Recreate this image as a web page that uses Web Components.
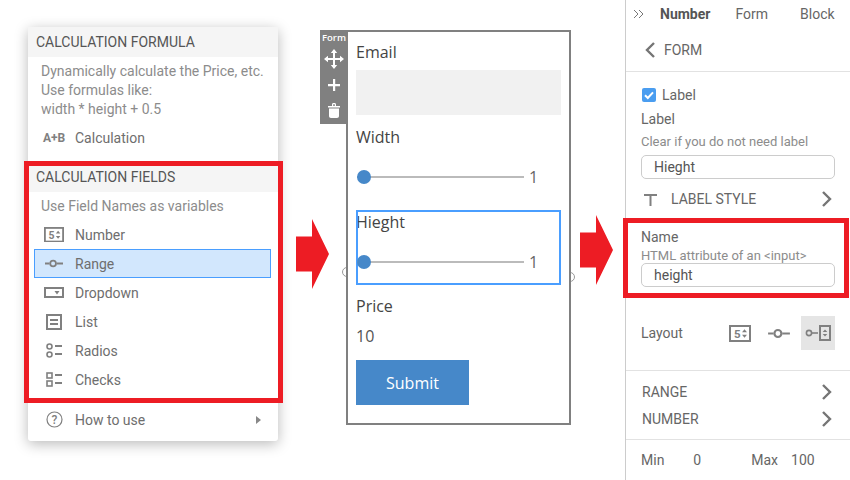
<!DOCTYPE html>
<html>
<head>
<meta charset="utf-8">
<title>Calculation fields</title>
<style>
    html, body { margin: 0; height: 100%; overflow: hidden; }
    html { background: #fff; }
    body { font-family: Roboto, "Liberation Sans", sans-serif; }
</style>
</head>
<body>
<demo-page>
    <calc-menu slot="menu"></calc-menu>
    <form-preview slot="form"></form-preview>
    <side-panel slot="side"></side-panel>
</demo-page>

<script>
// all the little grey pictures
const ICONS = {
    number: `<svg width="20" height="15.500" viewBox="0 0 22 17"><rect x="1" y="1" width="20" height="15" fill="none" stroke="#808080" stroke-width="2"/><text x="5" y="13" font-family="Roboto" font-size="11.5" font-weight="700" fill="#808080">5</text><path d="M13 7.2l2.5-3 2.5 3zM13 9.800l2.5 3 2.5-3z" fill="#808080"/></svg>`,
    range: `<svg width="20" height="9" viewBox="0 0 22 10"><path d="M1 5h5M14 5h7" stroke="#808080" stroke-width="2"/><circle cx="10" cy="5" r="3.2" fill="none" stroke="#808080" stroke-width="2"/></svg>`,
    rangeNumber: `<svg width="26" height="16" viewBox="0 0 26 16"><circle cx="4" cy="8" r="2.6" fill="none" stroke="#808080" stroke-width="1.6"/><path d="M7 8h6" stroke="#808080" stroke-width="1.6"/><rect x="15" y="1" width="10" height="14" fill="none" stroke="#808080" stroke-width="2"/><path d="M17.700 7l2.300-2.500 2.300 2.500zM17.700 9l2.300 2.500 2.300-2.500z" fill="#808080"/></svg>`,
    dropdown: `<svg width="20" height="11" viewBox="0 0 20 11"><rect x="1" y="1" width="18" height="9" fill="none" stroke="#808080" stroke-width="2"/><path d="M10.500 4h5l-2.500 3.500z" fill="#808080"/></svg>`,
    list: `<svg width="16" height="16" viewBox="0 0 16 16"><rect x="1" y="1" width="14" height="14" fill="none" stroke="#808080" stroke-width="2"/><path d="M4 6h8M4 10h8" stroke="#808080" stroke-width="2"/></svg>`,
    radios: `<svg width="17" height="15" viewBox="0 0 17 15"><circle cx="3.500" cy="3.500" r="2.500" fill="none" stroke="#808080" stroke-width="1.600"/><circle cx="3.500" cy="11.500" r="2.500" fill="none" stroke="#808080" stroke-width="1.600"/><path d="M9 3h7M9 11h7" stroke="#808080" stroke-width="2"/></svg>`,
    checks: `<svg width="17" height="15" viewBox="0 0 17 15"><rect x="1" y="1" width="5" height="5" fill="none" stroke="#808080" stroke-width="1.600"/><rect x="1" y="9" width="5" height="5" fill="none" stroke="#808080" stroke-width="1.600"/><path d="M9 3h7M9 11h7" stroke="#808080" stroke-width="2"/></svg>`,
    help: `<svg width="17" height="17" viewBox="0 0 17 17"><circle cx="8.500" cy="8.500" r="7.500" fill="none" stroke="#808080" stroke-width="1.200"/><text x="8.500" y="12.700" text-anchor="middle" font-family="Roboto" font-size="12" font-weight="500" fill="#808080">?</text></svg>`,
    move: `<svg width="20" height="20" viewBox="0 0 20 20" fill="#fff"><path d="M9 4h2v5h5v2h-5v5H9v-5H4V9h5z"/><path d="M10 0l3.200 4H6.800zM10 20l-3.200-4h6.400zM0 10l4-3.200v6.400zM20 10l-4 3.200V6.800z"/></svg>`,
    plus: `<svg width="12" height="12" viewBox="0 0 12 12"><path d="M5 0h2.200v5H12v2.200H7.200V12H5V7.200H0V5h5z" fill="#fff"/></svg>`,
    trash: `<svg width="12" height="15" viewBox="0 0 12 15" fill="#fff"><path d="M0 3h12v1.500H0zM4 1.500C4 .6 4.600 0 5.400 0h1.200C7.400 0 8 .6 8 1.500V3H6.800V1.300H5.200V3H4zM1 5.500h10V13c0 1.100-.8 2-2 2H3c-1.200 0-2-.9-2-2z"/></svg>`,
    back: `<svg width="12" height="18" viewBox="0 0 12 18"><path d="M10 2L3 9l7 7" fill="none" stroke="#757575" stroke-width="2.400"/></svg>`,
    next: `<svg width="12" height="18" viewBox="0 0 12 18"><path d="M2 2l7 7-7 7" fill="none" stroke="#757575" stroke-width="2.400"/></svg>`,
    caret: `<svg width="5" height="8" viewBox="0 0 5 8"><path d="M0 0l5 4-5 4z" fill="#888"/></svg>`,
    label: `<svg width="13" height="13" viewBox="0 0 13 13"><path d="M0 1h13v2H7.500v10h-2V3H0z" fill="#808080"/></svg>`,
    double: `<svg width="11" height="10" viewBox="0 0 11 10"><path d="M1 1l4 4-4 4M6 1l4 4-4 4" fill="none" stroke="#777" stroke-width="1"/></svg>`,
    check: `<svg width="14" height="14" viewBox="0 0 14 14"><rect width="14" height="14" rx="2" fill="#4a9df0"/><path d="M3 7.300l2.800 2.700L11 4.300" fill="none" stroke="#fff" stroke-width="2"/></svg>`
};

class GreyIcon extends HTMLElement {
    constructor() {
        super();
        const shadow = this.attachShadow({ mode: 'open' });
        shadow.innerHTML = `<style>:host { display: inline-flex; align-items: center; justify-content: center; line-height: 0; flex: none; }</style>` + (ICONS[this.getAttribute('name')] || '');
        // the layout picker shows the same icons a bit bigger
        const size = this.getAttribute('size');
        if (size) {
            const [w, h] = size.split('x');
            const svg = shadow.querySelector('svg');
            svg.setAttribute('width', w);
            svg.setAttribute('height', h);
        }
    }
}
customElements.define('grey-icon', GreyIcon);

// red annotations lie over the screenshot, so these two are absolute
class RedBox extends HTMLElement {
    constructor() {
        super();
        this.attachShadow({ mode: 'open' }).innerHTML = `<style>
            :host { display: block; position: absolute; box-sizing: border-box; border: 5px solid #ed1c24; pointer-events: none; }
        </style>`;
    }
}
customElements.define('red-box', RedBox);

class RedArrow extends HTMLElement {
    constructor() {
        super();
        this.attachShadow({ mode: 'open' }).innerHTML = `<style>
            :host { display: block; position: absolute; width: 33px; height: 70px; background: #ed1c24;
                clip-path: polygon(0 25%, 16px 25%, 16px 0, 100% 50%, 16px 100%, 16px 75%, 0 75%); }
        </style>`;
    }
}
customElements.define('red-arrow', RedArrow);

class MenuItem extends HTMLElement {
    constructor() {
        super();
        const icon = this.getAttribute('icon');
        this.attachShadow({ mode: 'open' }).innerHTML = `<style>
            :host { display: flex; align-items: center; height: 29px; box-sizing: border-box; margin: 0 7px 0 6px; padding-left: 9px; color: #6e6e6e; font-size: 14px; white-space: nowrap; }
            :host([active]) { background: #d2e7fd; outline: 1px solid #4a9eff; outline-offset: -1px; }
            .ico { width: 22px; display: flex; justify-content: center; margin-right: 10px; flex: none; }
            .ab { font-weight: 700; font-size: 12px; color: #808080; }
        </style>
        <span class="ico">${icon === 'ab' ? '<span class="ab">A+B</span>' : `<grey-icon name="${icon}"></grey-icon>`}</span>
        <slot></slot>`;
    }
}
customElements.define('menu-item', MenuItem);

class MenuHead extends HTMLElement {
    constructor() {
        super();
        this.attachShadow({ mode: 'open' }).innerHTML = `<style>
            :host { display: flex; align-items: center; height: 30px; padding-left: 8px; background: #f5f5f5; color: #555; font-size: 14px; text-transform: uppercase; }
        </style><slot></slot>`;
    }
}
customElements.define('menu-head', MenuHead);

class CalcMenu extends HTMLElement {
    constructor() {
        super();
        this.attachShadow({ mode: 'open' }).innerHTML = `<style>
            :host { display: block; position: relative; width: 250px; height: 414px; box-sizing: border-box; background: #fff; border-radius: 3px; box-shadow: 0 3px 14px rgba(0,0,0,.28); color: #666; }
            .note { color: #8c8c8c; font-size: 14px; line-height: 19px; padding: 5px 0 0 13px; }
            .space { height: 10px; }
            .rule { height: 11px; }
            .caret { margin-left: auto; margin-right: 10px; display: flex; }
            red-box { left: -4px; top: 134px; width: 259px; height: 242px; }
        </style>
        <menu-head>Calculation Formula</menu-head>
        <div class="note">Dynamically calculate the Price, etc.<br>Use formulas like:<br>width * height + 0.5</div>
        <menu-item icon="ab" style="margin-top:4px">Calculation</menu-item>
        <div class="space"></div>
        <menu-head>Calculation Fields</menu-head>
        <div class="note" style="height:28px;box-sizing:border-box">Use Field Names as variables</div>
        <menu-item icon="number">Number</menu-item>
        <menu-item icon="range" active>Range</menu-item>
        <menu-item icon="dropdown">Dropdown</menu-item>
        <menu-item icon="list">List</menu-item>
        <menu-item icon="radios">Radios</menu-item>
        <menu-item icon="checks">Checks</menu-item>
        <div class="rule"></div>
        <menu-item icon="help">How to use<span class="caret"><grey-icon name="caret"></grey-icon></span></menu-item>
        <red-box></red-box>`;
    }
}
customElements.define('calc-menu', CalcMenu);

class RangeSlider extends HTMLElement {
    constructor() {
        super();
        this.attachShadow({ mode: 'open' }).innerHTML = `<style>
            :host { display: flex; align-items: center; height: 16px; color: #666; font-size: 16px; }
            .track { position: relative; width: 167px; height: 2px; margin-left: 1px; background: #bbb; }
            .thumb { position: absolute; left: 0; top: -6px; width: 14px; height: 14px; border-radius: 50%; background: #4688c9; }
            .val { margin-left: 5px; }
        </style>
        <div class="track"><div class="thumb"></div></div><span class="val"><slot></slot></span>`;
    }
}
customElements.define('range-slider', RangeSlider);

class FormPreview extends HTMLElement {
    constructor() {
        super();
        this.attachShadow({ mode: 'open' }).innerHTML = `<style>
            :host { display: block; position: relative; width: 225px; height: 395px; box-sizing: border-box; border: 2px solid #808080; padding: 8px 8px 0; background: #fff; font-family: "Open Sans", sans-serif; font-size: 16px; line-height: 22px; color: #444; }
            .input { height: 45px; margin-top: 7px; background: #f1f1f1; }
            .lab { height: 22px; }
            .tools { position: absolute; left: -28px; top: -2px; width: 28px; height: 94px; background: #808080; display: flex; flex-direction: column; align-items: center; color: #fff; }
            .tools span { font-size: 9.500px; font-weight: 600; line-height: 12px; margin-top: 2px; }
            .tools grey-icon:nth-of-type(1) { margin-top: 5px; }
            .tools grey-icon:nth-of-type(2) { margin-top: 10px; }
            .tools grey-icon:nth-of-type(3) { margin-top: 12px; }
            .sel { height: 75px; box-sizing: border-box; outline: 2px solid #4a9eff; outline-offset: -2px; margin-top: 25px; padding-top: 1px; }
            .sel range-slider { margin-top: 21px; }
            .btn { width: 113px; height: 45px; margin-top: 13px; background: #4688c9; color: #fff; display: flex; align-items: center; justify-content: center; }
            .grip { position: absolute; width: 10px; height: 10px; box-sizing: border-box; border: 1.500px solid #999; border-radius: 50%; z-index: -1; }
        </style>
        <div class="tools"><span>Form</span><grey-icon name="move"></grey-icon><grey-icon name="plus"></grey-icon><grey-icon name="trash"></grey-icon></div>
        <div class="lab" style="margin-top:1px">Email</div>
        <div class="input"></div>
        <div class="lab" style="margin-top:11px">Width</div>
        <range-slider style="margin-top:21px">1</range-slider>
        <div class="sel">
            <div class="lab">Hieght</div>
            <range-slider>1</range-slider>
        </div>
        <div class="lab" style="margin-top:10px">Price</div>
        <div class="lab" style="margin-top:8px;color:#555">10</div>
        <div class="btn">Submit</div>
        <div class="grip" style="left:-6px;top:235px"></div>
        <div class="grip" style="right:-6px;top:240px"></div>`;
    }
}
customElements.define('form-preview', FormPreview);

class TextBox extends HTMLElement {
    constructor() {
        super();
        this.attachShadow({ mode: 'open' }).innerHTML = `<style>
            :host { display: flex; align-items: center; width: 194px; height: 24px; box-sizing: border-box; border: 1px solid #ccc; border-radius: 5px; padding-left: 12px; color: #555; font-size: 14px; }
        </style><slot></slot>`;
    }
}
customElements.define('text-box', TextBox);

class SideRow extends HTMLElement {
    constructor() {
        super();
        this.attachShadow({ mode: 'open' }).innerHTML = `<style>
            :host { display: flex; align-items: center; justify-content: space-between; padding-right: 18px; color: #666; font-size: 14px; }
            grey-icon { margin-right: -1px; }
        </style><span><slot></slot></span><grey-icon name="next"></grey-icon>`;
    }
}
customElements.define('side-row', SideRow);

class SidePanel extends HTMLElement {
    constructor() {
        super();
        this.attachShadow({ mode: 'open' }).innerHTML = `<style>
            :host { display: block; position: relative; width: 225px; height: 480px; box-sizing: border-box; border-left: 1px solid #ccc; color: #666; font-size: 14px; }
            .tabs { display: flex; align-items: center; height: 28px; padding-left: 7px; }
            .tabs b { margin-left: 16px; color: #555; font-weight: 700; }
            .tabs span:nth-of-type(1) { margin-left: 25px; }
            .tabs span:nth-of-type(2) { margin-left: 32px; }
            .back { display: flex; align-items: center; gap: 8px; height: 29px; margin-top: 7px; padding-left: 18px; }
            hr { border: 0; height: 1px; margin: 0; background: #e2e2e2; }
            .pad { padding-left: 15px; }
            .chk { display: flex; align-items: center; gap: 6px; height: 20px; margin-top: 13px; padding-left: 1px; }
            .l { height: 20px; line-height: 20px; }
            .hint { color: #8c8c8c; font-size: 13px; line-height: 16px; }
            .style { display: flex; align-items: center; height: 24px; margin-top: 8px; padding-left: 3px; }
            .style grey-icon:first-child { margin-right: 14px; }
            .style grey-icon:last-child { margin-left: auto; margin-right: 17px; }
            .layout { display: flex; align-items: center; height: 34px; margin-top: 29px; }
            .layout .opts { display: flex; align-items: center; margin-left: 40px; }
            .opt { width: 34px; height: 34px; display: flex; align-items: center; justify-content: center; }
            .opt + .opt { margin-left: 5px; }
            .opt.on { background: #e5e5e5; }
            .nums { display: flex; align-items: center; height: 40px; padding-left: 15px; position: relative; }
            red-box { left: -3px; top: 218px; width: 226px; height: 80px; }
        </style>
        <div class="tabs"><grey-icon name="double"></grey-icon><b>Number</b><span>Form</span><span>Block</span></div>
        <div class="back"><grey-icon name="back"></grey-icon>FORM</div>
        <hr style="margin-top:7px">
        <div class="pad">
            <div class="chk"><grey-icon name="check"></grey-icon>Label</div>
            <div class="l" style="margin-top:4px">Label</div>
            <div class="hint" style="margin-top:5px">Clear if you do not need label</div>
            <text-box style="margin-top:5px">Hieght</text-box>
            <div class="style"><grey-icon name="label"></grey-icon>LABEL STYLE<grey-icon name="next"></grey-icon></div>
            <div class="l" style="margin-top:16px">Name</div>
            <div class="hint" style="margin-top:1px">HTML attribute of an &lt;input&gt;</div>
            <text-box style="margin-top:-1px">height</text-box>
            <div class="layout">Layout
                <div class="opts">
                    <span class="opt"><grey-icon name="number" size="24x17"></grey-icon></span>
                    <span class="opt"><grey-icon name="range" size="24x11"></grey-icon></span>
                    <span class="opt on"><grey-icon name="rangeNumber"></grey-icon></span>
                </div>
            </div>
        </div>
        <hr style="margin-top:20px">
        <side-row class="pad" style="height:27px;margin-top:7px;padding-left:16px">RANGE</side-row>
        <side-row class="pad" style="height:27px;padding-left:16px">NUMBER</side-row>
        <hr style="margin-top:7px">
        <div class="nums"><span>Min</span><span style="margin-left:29px">0</span><span style="margin-left:50px">Max</span><span style="margin-left:13px">100</span></div>
        <red-box></red-box>`;
    }
}
customElements.define('side-panel', SidePanel);

class DemoPage extends HTMLElement {
    constructor() {
        super();
        this.attachShadow({ mode: 'open' }).innerHTML = `<style>
            :host { display: flex; position: relative; width: 850px; height: 480px; overflow: hidden; }
            .menu { margin: 27px 0 0 28px; }
            .form { margin: 30px 0 0 68px; }
            .side { margin-left: auto; }
            red-arrow:nth-of-type(1) { left: 296px; top: 219px; }
            red-arrow:nth-of-type(2) { left: 580px; top: 215px; }
        </style>
        <div class="menu"><slot name="menu"></slot></div>
        <div class="form"><slot name="form"></slot></div>
        <div class="side"><slot name="side"></slot></div>
        <red-arrow></red-arrow><red-arrow></red-arrow>`;
    }
}
customElements.define('demo-page', DemoPage);
</script>
</body>
</html>
